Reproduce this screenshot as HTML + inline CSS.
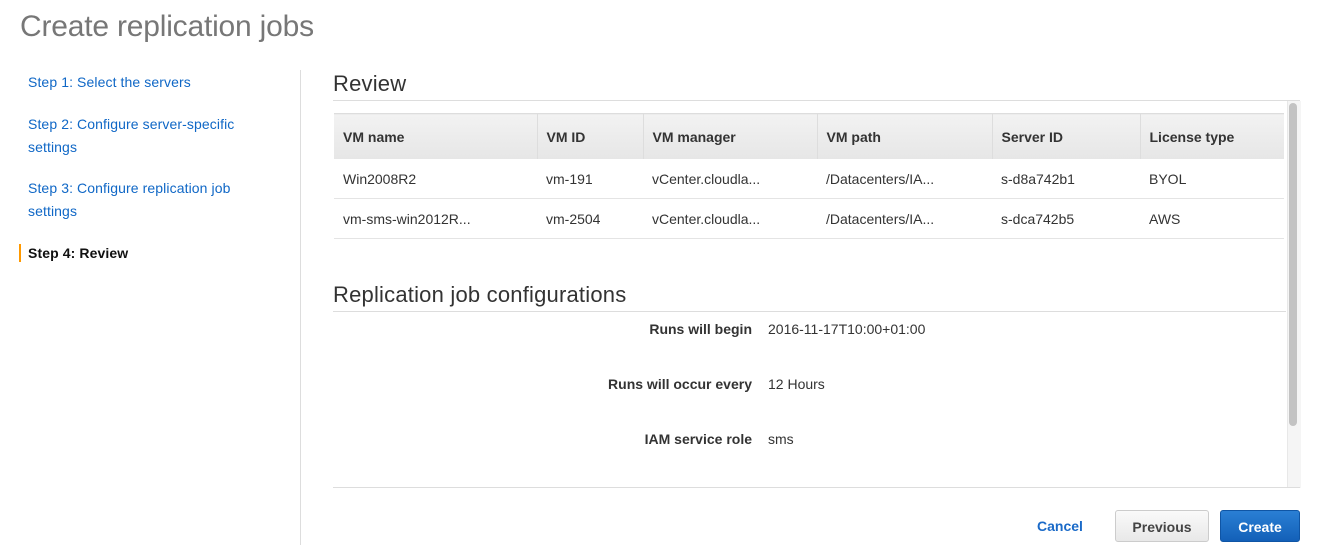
<!DOCTYPE html>
<html><head><style>
body{margin:0;width:1321px;height:553px;background:#fff;font-family:"Liberation Sans",Arial,sans-serif;position:relative;overflow:hidden;color:#333}
.a{position:absolute}
h1{position:absolute;left:20px;top:10px;margin:0;font-weight:normal;font-size:30px;color:#777;letter-spacing:-0.2px}
.s{position:absolute;left:28px;font-size:14px;color:#0f67c6;line-height:23px;letter-spacing:0.1px}
h2{position:absolute;margin:0;font-weight:normal;font-size:22px;color:#333;left:333px;letter-spacing:0.2px}
table{border-collapse:collapse;position:absolute;left:334px;top:113px;width:950px;font-size:14px;table-layout:fixed}
th{background:linear-gradient(#f2f2f2,#e6e6e6);text-align:left;padding:0 9px;height:45px;border-right:1px solid #ddd;border-top:1px solid #ddd;color:#333}
td{padding:0 9px;height:39px;border-bottom:1px solid #e4e4e4;color:#333}
.l{position:absolute;right:569px;font-size:14px;font-weight:bold;color:#333}
.v{position:absolute;left:768px;font-size:14px}
.btn{position:absolute;top:510px;height:32px;border-radius:3px;font-size:14px;font-weight:bold;text-align:center;line-height:32px;box-sizing:border-box}
</style></head><body>
<h1>Create replication jobs</h1>
<div class="s" style="top:71px">Step 1: Select the servers</div>
<div class="s" style="top:113px">Step 2: Configure server-specific<br>settings</div>
<div class="s" style="top:177px">Step 3: Configure replication job<br>settings</div>
<div class="a" style="left:19px;top:244px;width:2px;height:18px;background:#f90"></div>
<div class="s" style="top:242px;color:#111;font-weight:bold">Step 4: Review</div>
<div class="a" style="left:300px;top:70px;width:1px;height:475px;background:#ddd"></div>
<h2 style="top:71px">Review</h2>
<div class="a" style="left:333px;top:100px;width:967px;height:1px;background:#ddd"></div>
<div class="a" style="left:1287px;top:101px;width:13px;height:387px;background:#f5f5f5;border-left:1px solid #e8e8e8"></div>
<div class="a" style="left:1289px;top:103px;width:8px;height:323px;background:#c3c3c3;border-radius:4px"></div>
<table>
<colgroup><col style="width:203px"><col style="width:106px"><col style="width:174px"><col style="width:175px"><col style="width:148px"><col></colgroup>
<tr><th>VM name</th><th>VM ID</th><th>VM manager</th><th>VM path</th><th>Server ID</th><th style="border-right:none">License type</th></tr>
<tr><td>Win2008R2</td><td>vm-191</td><td>vCenter.cloudla...</td><td>/Datacenters/IA...</td><td>s-d8a742b1</td><td>BYOL</td></tr>
<tr><td>vm-sms-win2012R...</td><td>vm-2504</td><td>vCenter.cloudla...</td><td>/Datacenters/IA...</td><td>s-dca742b5</td><td>AWS</td></tr>
</table>
<h2 style="top:282px">Replication job configurations</h2>
<div class="a" style="left:333px;top:311px;width:953px;height:1px;background:#ddd"></div>
<div class="l" style="top:321px">Runs will begin</div><div class="v" style="top:321px">2016-11-17T10:00+01:00</div>
<div class="l" style="top:376px">Runs will occur every</div><div class="v" style="top:376px">12 Hours</div>
<div class="l" style="top:431px">IAM service role</div><div class="v" style="top:431px">sms</div>
<div class="a" style="left:333px;top:487px;width:967px;height:1px;background:#ddd"></div>
<div class="a" style="left:1037px;top:518px;font-size:14px;font-weight:bold;color:#1a6ac8">Cancel</div>
<div class="btn" style="left:1115px;width:94px;background:linear-gradient(#fafafa,#e8e8e8);border:1px solid #ccc;color:#444">Previous</div>
<div class="btn" style="left:1220px;width:80px;background:linear-gradient(#2a7fd4,#1360b8);border:1px solid #0f55a5;color:#fff">Create</div>
</body></html>
